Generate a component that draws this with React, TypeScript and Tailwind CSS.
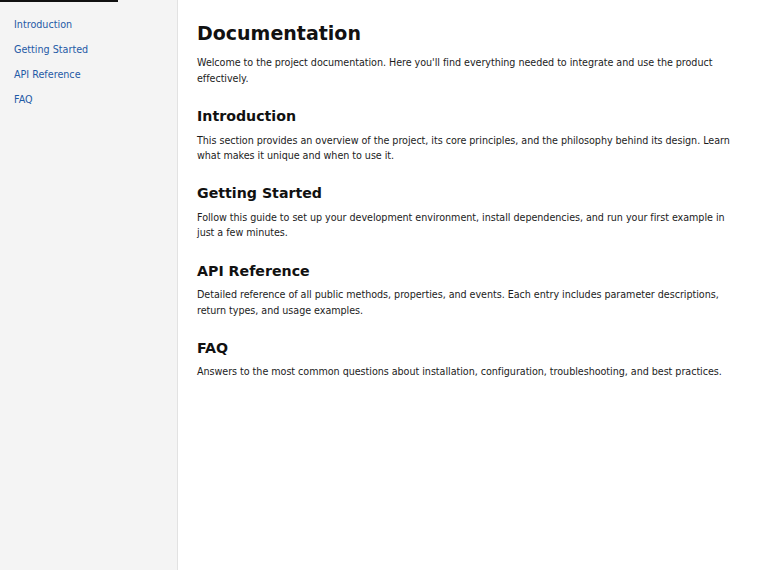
import React from 'react';

const links = ['Introduction', 'Getting Started', 'API Reference', 'FAQ'];

const sections = [
  {
    title: 'Introduction',
    body: 'This section provides an overview of the project, its core principles, and the philosophy behind its design. Learn what makes it unique and when to use it.',
  },
  {
    title: 'Getting Started',
    body: 'Follow this guide to set up your development environment, install dependencies, and run your first example in just a few minutes.',
  },
  {
    title: 'API Reference',
    body: 'Detailed reference of all public methods, properties, and events. Each entry includes parameter descriptions, return types, and usage examples.',
  },
  {
    title: 'FAQ',
    body: 'Answers to the most common questions about installation, configuration, troubleshooting, and best practices.',
  },
];

const App: React.FC = () => {
  return (
    <div className="flex h-screen bg-white text-[#1c1c1c] font-['DejaVu_Sans',sans-serif] text-[9.6px] leading-[15.4px]">
      <nav className="relative w-[178px] shrink-0 bg-[#f4f4f4] border-r border-[#e2e2e2] py-[12px] px-[14px]">
        {/* skip link peeking in at the top */}
        <div className="absolute top-0 left-0 w-[118px] h-[2px] bg-[#111]"></div>
        <ul>
          {links.map((l) => (
            <li key={l}>
              <a href="#" className="block py-[5px] leading-[15px] text-[#1f5aa6]">
                {l}
              </a>
            </li>
          ))}
        </ul>
      </nav>

      <main className="flex-1 pl-[19px] pr-[24px] pt-[22px]">
        <h1 className="text-[19px] leading-[1.2] font-bold text-[#111] mb-[10.6px]">Documentation</h1>
        <div className="tracking-[-0.04px]">
          <p>
            Welcome to the project documentation. Here you'll find everything needed to integrate and use the product
            effectively.
          </p>
          {sections.map((s) => (
            <section key={s.title} className="mt-[21px]">
              <h2 className="text-[14.2px] leading-[1.3] font-bold tracking-normal text-[#111] mb-[7px]">{s.title}</h2>
              <p>{s.body}</p>
            </section>
          ))}
        </div>
      </main>
    </div>
  );
};

export default App;
